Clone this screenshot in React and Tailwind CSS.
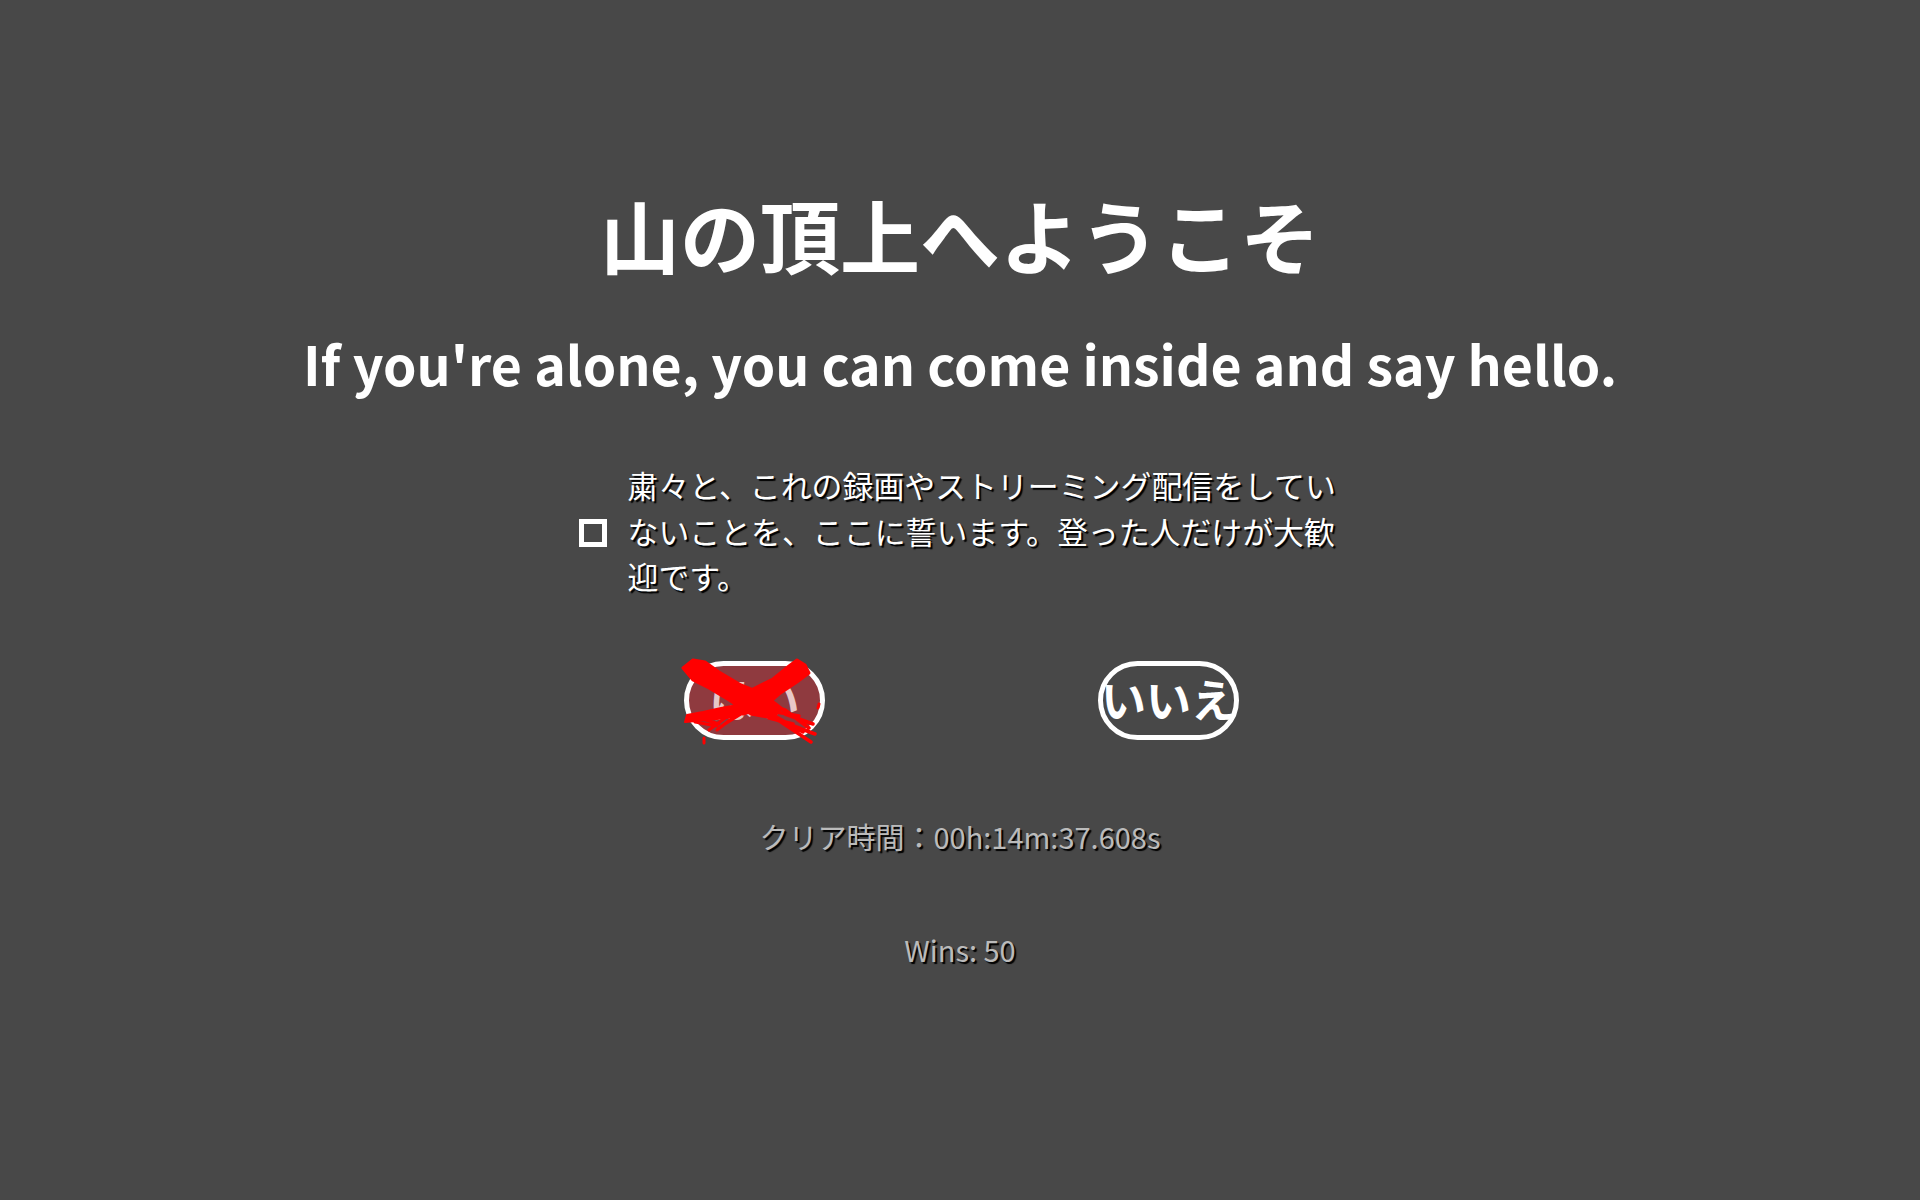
const App = () => {
  return (
    <main className="min-h-[1200px] bg-[#484848] flex flex-col items-center text-white font-['Noto_Sans_CJK_JP','Noto_Sans',sans-serif]">
      <h1 className="mt-[179px] text-[80px] leading-[108px] font-bold">山の頂上へようこそ</h1>
      <h2 className="mt-[38px] text-[53.6px] leading-[76px] font-bold">
        If you're alone, you can come inside and say hello.
      </h2>

      <label className="mt-[61px] flex items-center gap-[21px] -translate-x-[2px]">
        <span className="mt-[6px] w-[28px] h-[28px] border-[5px] border-white shrink-0" />
        <span className="w-[710px] text-[30.9px] leading-[45.5px] [text-shadow:2px_2px_1px_#000]">
          粛々と、これの録画やストリーミング配信をしていないことを、ここに誓います。登った人だけが大歓迎です。
        </span>
      </label>

      <div className="mt-[62px] ml-[3px] flex gap-[273px]">
        <button className="relative w-[141px] h-[79px] rounded-[40px] border-[5px] border-white bg-[#8f3a3f] text-[#e8c8c8] text-[45px] font-bold leading-none flex items-center justify-center pb-[3px]">
          はい
          <svg className="absolute left-[-8px] top-[-8px] overflow-visible" width="160" height="100" viewBox="0 0 160 100" fill="#ff0000" stroke="#ff0000" strokeLinecap="round" strokeLinejoin="round">
            <path d="M2 10 L12 2 L24 4 L38 14 L60 27 L82 36 L100 50 L92 60 L70 56 L48 42 L28 30 L12 22 Z" strokeWidth="3" />
            <path d="M124 7 L116 2 L108 8 L92 21 L70 32 L52 44 L62 56 L82 50 L98 36 L116 24 L128 15 Z" strokeWidth="3" />
            <path d="M62 46 L40 50 L22 54 L6 57 L4 64 L26 62 L46 60 L68 54 Z" strokeWidth="2" />
            <path d="M78 44 L104 52 L128 70 M84 52 L118 58 M96 62 L118 70 L134 76 M100 64 L130 84 M104 56 L132 66 M90 56 L122 74 M88 60 L112 66" strokeWidth="3.5" fill="none" />
            <path d="M44 60 L28 72 M54 58 L36 72 M18 60 L38 66 M36 68 L14 64 M60 56 L44 66" strokeWidth="3" fill="none" />
            <path d="M23 80 L23 85 M138 46 L137 50" strokeWidth="3" fill="none" />
          </svg>
        </button>
        <button className="w-[141px] h-[79px] rounded-[40px] border-[5px] border-white text-[45px] font-bold leading-none flex items-center justify-center whitespace-nowrap pb-[3px]">
          いいえ
        </button>
      </div>

      <p className="mt-[74px] text-[#bbbbbb] text-[29px] leading-[44px] [text-shadow:2px_2px_1px_#000]">
        クリア時間：00h:14m:37.608s
      </p>
      <p className="mt-[69px] text-[#bbbbbb] text-[29px] leading-[44px] [text-shadow:2px_2px_1px_#000]">Wins: 50</p>
    </main>
  );
};

export default App;
